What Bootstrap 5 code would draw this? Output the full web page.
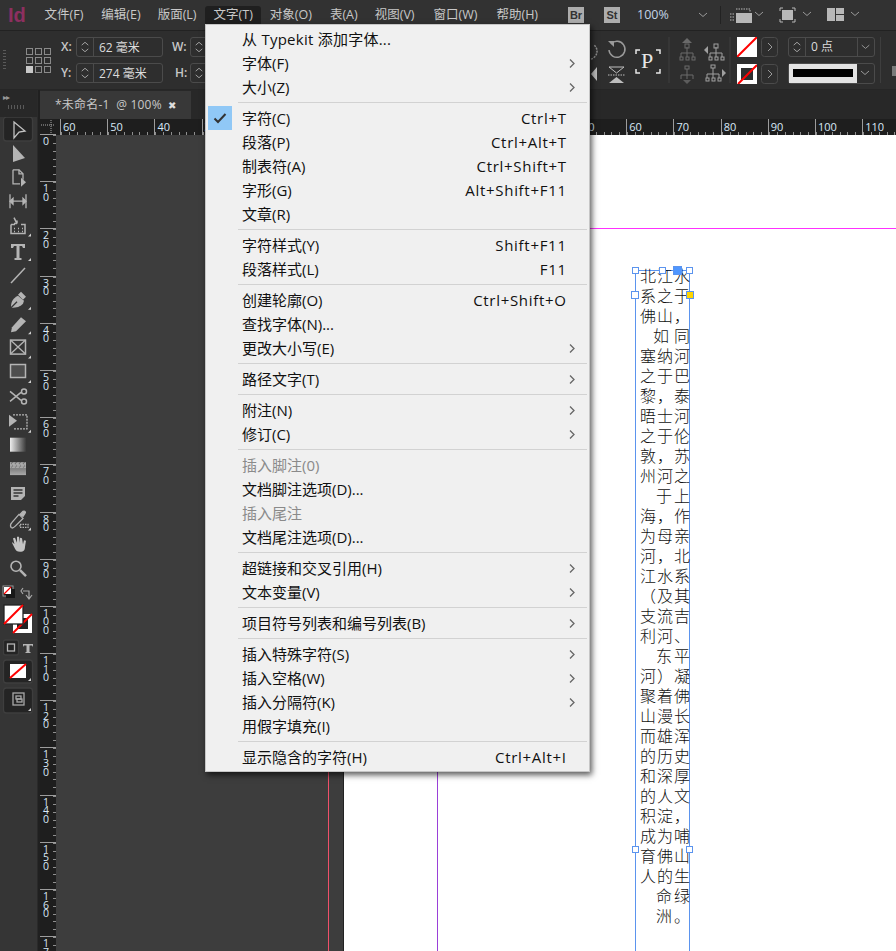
<!DOCTYPE html>
<html lang="zh">
<head>
<meta charset="utf-8">
<title>InDesign</title>
<link href="https://cdn.jsdelivr.net/npm/bootstrap@5.3.0/dist/css/bootstrap.min.css" rel="stylesheet">
<style>
html,body{margin:0;height:951px;overflow:hidden;background:#3d3d3d}
body{font-family:"Open Sans","Noto Sans CJK SC",sans-serif;font-size:12px;color:#ccc}
.app-shell{width:896px;height:951px;position:relative;overflow:hidden}
.menu-strip{height:31px;flex:none;background:#323232;border-bottom:1px solid #222;padding:6px 0 0 0}
.logo-id{width:36px;padding-left:8px;font:700 20px/18px "Liberation Sans",sans-serif;color:#8d2f60}
.menu-word{padding:0 8.5px;height:18px;line-height:18px;white-space:nowrap;color:#c8c8c8;font-size:12.5px}
.menu-word.on{background:#1f1f1f;border-radius:3px 3px 0 0}
.nudge1{margin-left:1px}.nudge2{margin-left:2px}
.bridge{width:16px;height:16px;background:#adadad;color:#333;font:700 11px/16px "Liberation Sans",sans-serif;text-align:center;flex:none}
.zoom-val{color:#c2d4e6;font-size:12.5px;line-height:18px;flex:none}
.ctrl-strip{height:59px;flex:none;background:#2e2e2e;border-bottom:1px solid #262626}
.grip-v{width:3px;height:21px;background:repeating-linear-gradient(180deg,#5a5a5a 0 1px,transparent 1px 3px);margin-left:3px}
.ref-grid{display:grid;grid-template-columns:repeat(3,7px);gap:2px;margin-left:20px}
.ref-grid i{width:7px;height:7px;border:1px solid #8a8a8a;display:block}
.ref-grid i.sel{background:#c8c8c8;border-color:#c8c8c8}
.xy-col{gap:6px}
.xy-row{height:20px;display:flex;align-items:center}
.xy-lab{width:15px;font-weight:600;color:#c8c8c8;font-size:12px;line-height:20px}
.num-box{height:20px;border:1px solid #4b4b4b;border-radius:3px;display:flex;align-items:center;color:#dcdcdc}
.num-text{padding:1px 0 0 5px}
.step-c{width:17px;height:18px;border-right:1px solid #4b4b4b;flex:none;display:block}
.sep-v{width:1px;height:46px;background:#3e3e3e;flex:none}
.tab-strip{height:29px;flex:none;background:#282828;padding-top:1px}
.doc-tab{width:151px;height:28px;background:#383838;padding-left:15px;line-height:28px;color:#c8c8c8;letter-spacing:.2px;font-size:12px}
.doc-x{margin-left:3px;font-size:10px;color:#ddd}
.tool-col{width:38px;background:#353535;border-right:1px solid #2a2a2a;flex:none}
.col-gap{width:2px;background:#202020;flex:none}
.tool-head{height:27px;background:#282828;position:relative}
.tool-head span{position:absolute;left:3px;top:0;font-size:8px;color:#9a9a9a;letter-spacing:-1px;line-height:13px}
.tool-head i{position:absolute;left:8px;top:15px;width:18px;height:4px;background:repeating-linear-gradient(90deg,#5a5a5a 0 1px,transparent 1px 3px)}
.ruler-top{height:16px;flex:none;background:#1e1e1e;display:flex;overflow:hidden}
.ruler-corner{width:20px;flex:none;background:#1e1e1e}
.ruler-corner svg{display:block}
.tick-h{flex:none;width:47.2px;height:16px;border-left:1px solid #9c9c9c;padding-left:2px;font:11px/15px "Open Sans",sans-serif;color:#d8e8f6;
 background:repeating-linear-gradient(90deg,#8f8f8f 0 1px,transparent 1px 7.87px) 0 100%/100% 3px no-repeat}
.ruler-left{width:16px;flex:none;background:#1e1e1e;overflow:hidden;margin-top:-1px}
.tick-v{height:47.2px;border-top:1px solid #9c9c9c;padding:2px 0 0 3px;font:10.5px/8.6px "Open Sans",sans-serif;color:#d8e8f6;overflow:hidden;
 background:repeating-linear-gradient(180deg,#8f8f8f 0 1px,transparent 1px 7.87px) 100% 0/3px 100% no-repeat}
.tick-v span{display:block;height:8.6px}
.paste-area{background:#3d3d3d;padding-left:288px;position:relative;min-height:0}
.sheet{background:#fff;position:relative;box-shadow:-1px 0 0 #222}
.bleed-line{position:absolute;left:272px;top:0;bottom:0;width:1px;background:#f0506a}
.margin-v{position:absolute;left:93px;top:0;bottom:0;width:1px;background:#9a40d8}
.guide-h{position:absolute;left:0;right:0;top:93px;height:1px;background:#ff30ff}
.text-frame{position:absolute;left:291px;top:135px;width:55px;height:700px;border:1px solid #5b94ee;border-bottom:0;padding:0 0 0 4px;
 font-family:"Noto Sans CJK SC",sans-serif;font-weight:300;font-size:16px;line-height:20px;color:#111}
.text-frame div.ln{text-align:justify;text-align-last:justify;width:50px;height:20px;white-space:nowrap;overflow:visible}
.text-frame div.ln:first-child{margin-top:-6px}
.text-frame div.ln.ind13{padding-left:13px}
.text-frame div.ln.ind16{padding-left:16px}
.handle{position:absolute;width:7px;height:7px;background:#fff;border:1px solid #5b94ee}
.handle.big{width:8px;height:8px}
.handle.solid{background:#4f96ff;width:9px;height:9px}
.handle.port{background:#ffd500;width:8px;height:8px}
.type-menu.dropdown-menu{display:block;position:absolute;left:205px;top:24px;width:385px;height:748px;margin:0;padding:2px 0 0;background:#f0f0f0;border:1px solid #c6c6c6;border-radius:0;box-shadow:2px 3px 6px rgba(0,0,0,.65);font-size:15px;font-family:"Open Sans","Noto Sans CJK SC",sans-serif}
.type-menu .dropdown-item{height:24px;line-height:24px;padding:0 23px 0 36px;color:#111;display:flex;justify-content:space-between;position:relative;background:transparent;white-space:nowrap}
.type-menu .dropdown-item.disabled{color:#8a8a8a}
.type-menu .dropdown-divider{margin:3px 2px 3px 32px;border-top:1px solid #d2d2d2;opacity:1;height:1px}
.key-hint{letter-spacing:.7px;margin-right:-.7px}
.wide-latin{letter-spacing:.25px}
.sub-mark{position:absolute;right:14px;top:8px;display:block}
.check-box{position:absolute;left:2px;top:0;width:24px;height:24px;background:#90c8f6;display:flex;align-items:center;justify-content:center}
</style>
</head>
<body>
<div class="app-shell d-flex flex-column">

  <!-- application menu bar -->
  <div class="menu-strip d-flex align-items-start">
    <div class="logo-id">Id</div>
    <div class="menu-word">文件(F)</div>
    <div class="menu-word nudge1">编辑(E)</div>
    <div class="menu-word">版面(L)</div>
    <div class="menu-word on">文字(T)</div>
    <div class="menu-word">对象(O)</div>
    <div class="menu-word nudge1">表(A)</div>
    <div class="menu-word">视图(V)</div>
    <div class="menu-word nudge2">窗口(W)</div>
    <div class="menu-word nudge2">帮助(H)</div>
    <div class="ms-auto d-flex align-items-center flex-shrink-0" style="width:328px;height:18px">
      <div class="bridge">Br</div>
      <div class="bridge" style="margin-left:20px;margin-right:17px">St</div>
      <div class="zoom-val" style="width:62px">100%</div>
      <svg width="197" height="18" viewBox="0 0 197 18" style="flex:none">
        <path d="M0 7l4 3.500 4-3.500" fill="none" stroke="#9a9a9a"/>
        <g transform="translate(4 0)">
        <rect x="17" y="-1" width="1" height="20" fill="#222"/>
        <path d="M27 8h5M27 11h4M27 14h5" stroke="#b8b8b8" stroke-dasharray="1.500 1"/><rect x="33" y="7" width="16" height="10" fill="#b8b8b8"/><path d="M33 3h14v3" fill="none" stroke="#b8b8b8" stroke-dasharray="1.500 1"/>
        <path d="M52 6l4 3.500 4-3.500" fill="none" stroke="#9a9a9a"/>
        <path d="M77 5V2h3M89 2h3v3M92 13v3h-3M80 16h-3v-3" fill="none" stroke="#b8b8b8"/><rect x="79" y="4" width="11" height="10" fill="#b8b8b8"/>
        <path d="M100 6l4 3.500 4-3.500" fill="none" stroke="#9a9a9a"/>
        <rect x="124" y="2" width="8" height="13" fill="#b8b8b8"/><rect x="133" y="2" width="8" height="6" fill="#b8b8b8"/><rect x="133" y="9" width="8" height="6" fill="#b8b8b8"/>
        <path d="M148 6l4 3.500 4-3.500" fill="none" stroke="#9a9a9a"/>
        </g>
      </svg>
    </div>
  </div>

  <!-- control panel -->
  <div class="ctrl-strip d-flex align-items-center">
    <div class="grip-v"></div>
    <div class="ref-grid">
      <i></i><i></i><i></i><i></i><i></i><i></i><i class="sel"></i><i></i><i></i>
    </div>
    <div class="d-flex flex-column xy-col" style="margin-left:10px">
      <div class="xy-row"><span class="xy-lab">X:</span>
        <div class="num-box" style="width:87px"><svg class="step-c" viewBox="0 0 17 18"><path d="M5 7l3.500-3 3.500 3M5 11l3.500 3 3.500-3" fill="none" stroke="#a8a8a8"/></svg><span class="num-text">62 毫米</span></div>
        <span class="xy-lab" style="margin-left:9px;width:18px">W:</span>
        <div class="num-box" style="width:40px"><svg class="step-c" viewBox="0 0 17 18"><path d="M5 7l3.500-3 3.500 3M5 11l3.500 3 3.500-3" fill="none" stroke="#a8a8a8"/></svg></div>
      </div>
      <div class="xy-row"><span class="xy-lab">Y:</span>
        <div class="num-box" style="width:87px"><svg class="step-c" viewBox="0 0 17 18"><path d="M5 7l3.500-3 3.500 3M5 11l3.500 3 3.500-3" fill="none" stroke="#a8a8a8"/></svg><span class="num-text">274 毫米</span></div>
        <span class="xy-lab" style="margin-left:12px;width:15px">H:</span>
        <div class="num-box" style="width:40px"><svg class="step-c" viewBox="0 0 17 18"><path d="M5 7l3.500-3 3.500 3M5 11l3.500 3 3.500-3" fill="none" stroke="#a8a8a8"/></svg></div>
      </div>
    </div>
    <div class="ms-auto d-flex align-items-center" style="width:306px;overflow:hidden">
      <svg width="141" height="50" viewBox="0 0 141 50" style="flex:none">
        <path d="M1 24a8 8 0 0 0 6-8 8 8 0 0 0-3-6" fill="none" stroke="#8e8e8e" stroke-width="1.500" stroke-dasharray="2 1"/>
        <path d="M21 9a8 8 0 1 1-2 6" fill="none" stroke="#9a9a9a" stroke-width="1.500"/><path d="M18 6h6v6z" fill="#9a9a9a"/>
        <path d="M7 32v14l-6-7z" fill="#bdbdbd"/>
        <path d="M19 32h15l-7.500 6z" fill="none" stroke="#bdbdbd"/><path d="M18 40h17" stroke="#bdbdbd" stroke-dasharray="1.500 1"/><path d="M19 48h15l-7.500-6z" fill="#bdbdbd"/>
        <path d="M46 19v-4h4M66 15h4v4M70 34v4h-4M50 38h-4v-4" fill="none" stroke="#e6e6e6" stroke-width="1.500"/>
        <path d="M79 2v46" stroke="#3e3e3e"/>
        <g fill="none" stroke="#6a6a6a"><path d="M91 18h12M97 12v6M91 18v4M97 18v4M103 18v4"/><rect x="95" y="9" width="4" height="4"/><rect x="90" y="22" width="3" height="3"/><rect x="96" y="22" width="3" height="3"/><rect x="102" y="22" width="3" height="3"/></g><path d="M92 8l5-5 5 5z" fill="#6a6a6a"/>
        <g fill="none" stroke="#6a6a6a"><path d="M91 40h12M97 34v6M91 40v4M97 40v4M103 40v4"/><rect x="95" y="31" width="4" height="3"/></g><path d="M93 45l4 4 4-4z" fill="#5c5c5c"/>
        <g fill="none" stroke="#a0a0a0"><path d="M120 18h12M126 12v6M120 18v4M126 18v4M132 18v4"/><rect x="124" y="9" width="4" height="4"/><rect x="119" y="22" width="3" height="3"/><rect x="125" y="22" width="3" height="3"/><rect x="131" y="22" width="3" height="3"/></g><path d="M118 11v8l-4-4z" fill="#a0a0a0"/>
        <g fill="none" stroke="#a0a0a0"><path d="M117 39h12M123 33v6M117 39v4M123 39v4M129 39v4"/><rect x="121" y="30" width="4" height="3"/><rect x="116" y="43" width="3" height="3"/><rect x="122" y="43" width="3" height="3"/><rect x="128" y="43" width="3" height="3"/></g><path d="M132 34v8l4-4z" fill="#a0a0a0"/>
        <path d="M140 2v46" stroke="#3e3e3e"/>
        <text x="51" y="33" font-family="Liberation Serif,serif" font-size="22" fill="#e6e6e6">P</text>
      </svg>
      <div class="d-flex flex-column" style="gap:7px;margin-left:6px;flex:none">
        <div class="d-flex align-items-center" style="gap:4px">
          <svg width="20" height="20" viewBox="0 0 20 20" style="display:block"><rect width="20" height="20" fill="#fff"/><path d="M0 20L20 0" stroke="#f00" stroke-width="2"/></svg>
          <svg width="17" height="20" viewBox="0 0 17 20" style="display:block"><rect x=".5" y=".5" width="16" height="19" rx="3" fill="none" stroke="#4b4b4b"/><path d="M7 6l4 4-4 4" fill="none" stroke="#9a9a9a"/></svg>
        </div>
        <div class="d-flex align-items-center" style="gap:4px">
          <svg width="20" height="20" viewBox="0 0 20 20" style="display:block"><rect width="20" height="20" fill="#fff"/><rect x="4" y="4" width="12" height="12" fill="#2e2e2e"/><path d="M1 20L20 1" stroke="#f00" stroke-width="2"/></svg>
          <svg width="17" height="20" viewBox="0 0 17 20" style="display:block"><rect x=".5" y=".5" width="16" height="19" rx="3" fill="none" stroke="#4b4b4b"/><path d="M7 6l4 4-4 4" fill="none" stroke="#9a9a9a"/></svg>
        </div>
      </div>
      <div class="d-flex flex-column" style="gap:6px;margin-left:10px;flex:none">
        <div class="num-box" style="width:87px"><svg class="step-c" viewBox="0 0 17 18"><path d="M5 7l3.500-3 3.500 3M5 11l3.500 3 3.500-3" fill="none" stroke="#a8a8a8"/></svg><span style="padding-left:5px;width:51px;height:18px;line-height:18px">0 点</span><svg width="17" height="18" viewBox="0 0 17 18" style="border-left:1px solid #4b4b4b"><path d="M4 7l4 3.500 4-3.500" fill="none" stroke="#9a9a9a"/></svg></div>
        <div class="num-box" style="width:87px;height:21px">
          <svg width="68" height="19" viewBox="0 0 68 19" style="display:block;flex:none"><rect width="68" height="19" fill="#e3e3e3"/><rect x="4" y="5" width="60" height="8" fill="#000"/></svg>
          <svg width="17" height="18" viewBox="0 0 17 18"><path d="M4 7l4 3.500 4-3.500" fill="none" stroke="#9a9a9a"/></svg>
        </div>
      </div>
      <div class="sep-v" style="margin-left:5px"></div>
      <svg width="10" height="46" viewBox="0 0 10 46" style="flex:none;margin-left:10px"><path d="M6 8V4h4M6 18v4h4" fill="none" stroke="#aaa"/><rect x="1" y="29" width="9" height="10" fill="#7a7a7a"/></svg>
    </div>
  </div>

  <!-- workspace -->
  <div class="d-flex flex-grow-1" style="min-height:0">
    <div class="tool-col">
      <div class="tool-head"><span>▸▸</span><i></i></div>
      <svg width="38" height="634" viewBox="0 0 38 634" style="display:block" fill="none" stroke="#b4b4b4" stroke-width="1.300">
        <rect x="3.500" y="0" width="29" height="24" rx="3" fill="#242424" stroke="#3e3e3e"/>
        <path d="M14 5l11 9-6 1-5 6z" stroke="#c2c2c2"/>
        <path d="M13 28l12 13-12 4z" fill="#b4b4b4" stroke="none"/>
        <g transform="translate(0,48.800)"><path d="M13 4h6l4 4v6M13 4v14h7"/><path d="M19 4v4h4"/><path d="M21 12v9l5-4.500z" fill="#b4b4b4" stroke="none"/></g>
        <g transform="translate(0,73.200)"><path d="M10 4v14M26 4v14M13 11h10"/><path d="M13 8v6l-3-3zM23 8v6l3-3z" fill="#b4b4b4"/></g>
        <g transform="translate(0,97.600)" stroke-width="1.500"><path d="M11 10v9h14v-9h-4M15 10h-4"/><path d="M14 3l3 6M17 9h-3M17 9V6" /><path d="M14 14h1M18 14h1M22 14h1M14 17h1M18 17h1M22 17h1"/><path d="M31 22h-3l3-3z" fill="#cfcfcf" stroke="none"/></g>
        <g transform="translate(0,122)"><path d="M11 5h14v4h-2l-1-2h-2.500v12h2v2h-7v-2h2V7H14l-1 2h-2z" fill="#b4b4b4" stroke="none"/><path d="M31 22h-3l3-3z" fill="#cfcfcf" stroke="none"/></g>
        <path d="M11 166l14-15" stroke-width="1.500" />
        <g transform="translate(0,170.800)"><path d="M11 20c0-5 1-8 5-11l2-1 6 5-1 3c-3 3-6 4-12 4z" fill="#b4b4b4" stroke="none"/><path d="M18 7l3-3 5 5-3 3z" fill="#b4b4b4" stroke="none"/><path d="M11 20l6-6" stroke="#353535"/><path d="M31 22h-3l3-3z" fill="#cfcfcf" stroke="none"/></g>
        <g transform="translate(0,195.200)"><path d="M11 20l1-5 9-10 5 4-10 10z" fill="#b4b4b4" stroke="none"/><path d="M31 22h-3l3-3z" fill="#cfcfcf" stroke="none"/></g>
        <g transform="translate(0,219.600)"><rect x="10.500" y="3.500" width="15" height="14" stroke-width="1.500"/><path d="M10.500 3.500l15 14M25.500 3.500l-15 14"/><path d="M31 22h-3l3-3z" fill="#cfcfcf" stroke="none"/></g>
        <g transform="translate(0,244)"><rect x="10.500" y="3.500" width="15" height="13" fill="#4e4e4e" stroke-width="1.500"/><path d="M31 22h-3l3-3z" fill="#cfcfcf" stroke="none"/></g>
        <g transform="translate(0,268.400)" stroke-width="1.500"><path d="M10 6l11 9M10 16l11-9"/><circle cx="24" cy="6" r="2.500"/><circle cx="24" cy="16" r="2.500"/></g>
        <g transform="translate(0,292.800)"><path d="M9 5l8 6-8 6z" fill="#b4b4b4" stroke="none"/><path d="M13 5h14v14H14" stroke-dasharray="2 1"/><path d="M31 23h-3l3-3z" fill="#cfcfcf" stroke="none"/></g>
        <defs><linearGradient id="gr1"><stop offset="0" stop-color="#eee"/><stop offset="1" stop-color="#3a3a3a"/></linearGradient><linearGradient id="gr2" x2="0" y2="1"><stop offset="0" stop-color="#555"/><stop offset="1" stop-color="#aaa"/></linearGradient><pattern id="chk" width="4" height="4" patternUnits="userSpaceOnUse"><rect width="2" height="2" fill="#444"/><rect x="2" y="2" width="2" height="2" fill="#444"/></pattern></defs>
        <g transform="translate(0,317.200)"><rect x="10" y="3.500" width="16" height="14" fill="url(#gr1)" stroke="none"/></g>
        <g transform="translate(0,341.600)"><rect x="10" y="3.500" width="16" height="13" fill="url(#gr2)" stroke="none"/><rect x="10" y="3.500" width="16" height="6" fill="url(#chk)" stroke="none"/></g>
        <g transform="translate(0,366)"><path d="M11 4h14v9l-4 4H11z" fill="#b4b4b4" stroke="none"/><path d="M13.500 7h9M13.500 10h9M13.500 13h5" stroke="#353535"/></g>
        <g transform="translate(0,390.400)"><path d="M11 20c-1-2 0-4 1-5l7-8 4 4-8 8c-1 1-3 2-4 1z"/><path d="M20 7l3-3c2-1 3 1 2 2l-2 3z" fill="#b4b4b4"/><path d="M20 17h8v3h-8z" stroke-dasharray="1.500 1"/><path d="M31 23h-3l3-3z" fill="#cfcfcf" stroke="none"/></g>
        <g transform="translate(0,414.800)"><path d="M12 11l3 6c1 2 2 3 5 3 4 0 5-2 5-5l1-6-2-.500-1 4-1-6-2-.500v5l-1-6h-2v6l-2-5-2 .500 1.500 6-2-2z" fill="#c4c4c4" stroke="none"/></g>
        <g transform="translate(0,439.200)" stroke-width="1.600"><circle cx="16" cy="10" r="5"/><path d="M20 14l6 6" stroke-width="2.500"/></g>
        <g stroke="none">
          <rect x="3" y="469" width="10" height="10" fill="#181818" stroke="#999" stroke-width="1"/><rect x="6" y="472" width="9" height="9" fill="#181818"/><rect x="4" y="470" width="7" height="7" fill="#fff"/><path d="M4 477l7-7" stroke="#f00"/>
          <path d="M23 474h6v7M26 478l3 4 3-4M23 471l-2 3 2 3" fill="none" stroke="#a8a8a8" stroke-width="1.200"/>
          <rect x="13" y="497" width="19" height="19" fill="#fff"/><rect x="17" y="501" width="11" height="11" fill="#222"/><path d="M13 516l19-19" stroke="#f00" stroke-width="2"/>
          <rect x="4" y="488" width="19" height="19" fill="#fff" stroke="#222"/><path d="M4 507l19-19" stroke="#f00" stroke-width="2"/>
          <rect x="3.500" y="523" width="15" height="15" rx="2" fill="#242424" stroke="#3e3e3e"/><rect x="7.500" y="527" width="7" height="7" fill="none" stroke="#b4b4b4"/>
          <path d="M23 527h10v3l-1-1.500h-2.500v6.500h1v1h-5v-1h1v-6.500H24L23 530z" fill="#b4b4b4"/>
          <rect x="3.500" y="543" width="29" height="23" rx="3" fill="#242424" stroke="#3e3e3e"/><rect x="10" y="547" width="16" height="14" fill="#fff"/><path d="M10 561l16-14" stroke="#f00" stroke-width="2"/><path d="M31 564h-3l3-3z" fill="#cfcfcf"/>
          <rect x="3.500" y="571" width="29" height="25" rx="3" fill="#242424" stroke="#3e3e3e"/><rect x="13" y="576" width="11" height="12" fill="none" stroke="#a8a8a8"/><rect x="16" y="579" width="5" height="3" fill="none" stroke="#a8a8a8"/><rect x="17" y="582" width="5" height="3" fill="none" stroke="#a8a8a8"/><path d="M31 594h-3l3-3z" fill="#cfcfcf"/>
        </g>
      </svg>
    </div>
    <div class="col-gap"></div>
    <div class="d-flex flex-column flex-grow-1" style="min-width:0">
      <div class="tab-strip"><div class="doc-tab">*未命名-1&nbsp; @ 100% <span class="doc-x">✖</span></div></div>
      <div class="ruler-top">
        <div class="ruler-corner"><svg width="20" height="16" viewBox="0 0 20 16"><path d="M1 6h13M11 1v14" stroke="#aaa" stroke-dasharray="1 1" fill="none"/></svg></div>
        <div class="tick-h">60</div><div class="tick-h">50</div><div class="tick-h">40</div><div class="tick-h">30</div><div class="tick-h">20</div><div class="tick-h">10</div><div class="tick-h">0</div><div class="tick-h">10</div><div class="tick-h">20</div><div class="tick-h">30</div><div class="tick-h">40</div><div class="tick-h">50</div><div class="tick-h">60</div><div class="tick-h">70</div><div class="tick-h">80</div><div class="tick-h">90</div><div class="tick-h">100</div><div class="tick-h">110</div>
      </div>
      <div class="d-flex flex-grow-1" style="min-height:0">
        <div class="ruler-left">
          <div class="tick-v"><span>0</span></div>
          <div class="tick-v"><span>1</span><span>0</span></div>
          <div class="tick-v"><span>2</span><span>0</span></div>
          <div class="tick-v"><span>3</span><span>0</span></div>
          <div class="tick-v"><span>4</span><span>0</span></div>
          <div class="tick-v"><span>5</span><span>0</span></div>
          <div class="tick-v"><span>6</span><span>0</span></div>
          <div class="tick-v"><span>7</span><span>0</span></div>
          <div class="tick-v"><span>8</span><span>0</span></div>
          <div class="tick-v"><span>9</span><span>0</span></div>
          <div class="tick-v"><span>1</span><span>0</span><span>0</span></div>
          <div class="tick-v"><span>1</span><span>1</span><span>0</span></div>
          <div class="tick-v"><span>1</span><span>2</span><span>0</span></div>
          <div class="tick-v"><span>1</span><span>3</span><span>0</span></div>
          <div class="tick-v"><span>1</span><span>4</span><span>0</span></div>
          <div class="tick-v"><span>1</span><span>5</span><span>0</span></div>
          <div class="tick-v"><span>1</span><span>6</span><span>0</span></div>
          <div class="tick-v"><span>1</span><span>7</span></div>
        </div>
        <div class="paste-area flex-grow-1 d-flex">
          <div class="bleed-line"></div>
          <div class="sheet flex-grow-1">
            <div class="margin-v"></div>
            <div class="guide-h"></div>
            <div class="text-frame">
              <div class="ln">北江水</div><div class="ln">系之于</div><div class="ln">佛山，</div><div class="ln ind13">如同</div><div class="ln">塞纳河</div><div class="ln">之于巴</div><div class="ln">黎，泰</div><div class="ln">晤士河</div><div class="ln">之于伦</div><div class="ln">敦，苏</div><div class="ln">州河之</div><div class="ln ind16">于上</div><div class="ln">海，作</div><div class="ln">为母亲</div><div class="ln">河，北</div><div class="ln">江水系</div><div class="ln">（及其</div><div class="ln">支流吉</div><div class="ln">利河、</div><div class="ln ind16">东平</div><div class="ln">河）凝</div><div class="ln">聚着佛</div><div class="ln">山漫长</div><div class="ln">而雄浑</div><div class="ln">的历史</div><div class="ln">和深厚</div><div class="ln">的人文</div><div class="ln">积淀，</div><div class="ln">成为哺</div><div class="ln">育佛山</div><div class="ln">人的生</div><div class="ln ind16">命绿</div><div class="ln ind16">洲。</div>
              <span class="handle" style="left:-4px;top:-4px"></span>
              <span class="handle" style="left:23px;top:-4px"></span>
              <span class="handle solid" style="left:37px;top:-5px"></span>
              <span class="handle" style="left:50px;top:-4px"></span>
              <span class="handle big" style="left:-5px;top:20px"></span>
              <span class="handle port" style="left:50px;top:20px"></span>
              <span class="handle" style="left:-4px;top:575px"></span>
              <span class="handle" style="left:50px;top:575px"></span>
            </div>
          </div>
        </div>
      </div>
    </div>
  </div>

  <!-- 文字 menu -->
  <div class="dropdown-menu type-menu">
    <a class="dropdown-item"><span class="wide-latin">从 Typekit 添加字体...</span></a>
    <a class="dropdown-item"><span>字体(F)</span><svg class="sub-mark" width="6" height="9" viewBox="0 0 6 9"><path d="M1 .5l4 4-4 4" fill="none" stroke="#666" stroke-width="1.300"/></svg></a>
    <a class="dropdown-item"><span>大小(Z)</span><svg class="sub-mark" width="6" height="9" viewBox="0 0 6 9"><path d="M1 .5l4 4-4 4" fill="none" stroke="#666" stroke-width="1.300"/></svg></a>
    <div class="dropdown-divider"></div>
    <a class="dropdown-item"><span class="check-box"><svg width="14" height="12" viewBox="0 0 14 12"><path d="M1.500 6.500l3.500 3.500 7.500-8" fill="none" stroke="#333" stroke-width="2"/></svg></span><span>字符(C)</span><span class="key-hint">Ctrl+T</span></a>
    <a class="dropdown-item"><span>段落(P)</span><span class="key-hint">Ctrl+Alt+T</span></a>
    <a class="dropdown-item"><span>制表符(A)</span><span class="key-hint">Ctrl+Shift+T</span></a>
    <a class="dropdown-item"><span>字形(G)</span><span class="key-hint">Alt+Shift+F11</span></a>
    <a class="dropdown-item"><span>文章(R)</span></a>
    <div class="dropdown-divider"></div>
    <a class="dropdown-item"><span>字符样式(Y)</span><span class="key-hint">Shift+F11</span></a>
    <a class="dropdown-item"><span>段落样式(L)</span><span class="key-hint">F11</span></a>
    <div class="dropdown-divider"></div>
    <a class="dropdown-item"><span>创建轮廓(O)</span><span class="key-hint">Ctrl+Shift+O</span></a>
    <a class="dropdown-item"><span>查找字体(N)...</span></a>
    <a class="dropdown-item"><span>更改大小写(E)</span><svg class="sub-mark" width="6" height="9" viewBox="0 0 6 9"><path d="M1 .5l4 4-4 4" fill="none" stroke="#666" stroke-width="1.300"/></svg></a>
    <div class="dropdown-divider"></div>
    <a class="dropdown-item"><span>路径文字(T)</span><svg class="sub-mark" width="6" height="9" viewBox="0 0 6 9"><path d="M1 .5l4 4-4 4" fill="none" stroke="#666" stroke-width="1.300"/></svg></a>
    <div class="dropdown-divider"></div>
    <a class="dropdown-item"><span>附注(N)</span><svg class="sub-mark" width="6" height="9" viewBox="0 0 6 9"><path d="M1 .5l4 4-4 4" fill="none" stroke="#666" stroke-width="1.300"/></svg></a>
    <a class="dropdown-item"><span>修订(C)</span><svg class="sub-mark" width="6" height="9" viewBox="0 0 6 9"><path d="M1 .5l4 4-4 4" fill="none" stroke="#666" stroke-width="1.300"/></svg></a>
    <div class="dropdown-divider"></div>
    <a class="dropdown-item disabled"><span>插入脚注(0)</span></a>
    <a class="dropdown-item"><span>文档脚注选项(D)...</span></a>
    <a class="dropdown-item disabled"><span>插入尾注</span></a>
    <a class="dropdown-item"><span>文档尾注选项(D)...</span></a>
    <div class="dropdown-divider"></div>
    <a class="dropdown-item"><span>超链接和交叉引用(H)</span><svg class="sub-mark" width="6" height="9" viewBox="0 0 6 9"><path d="M1 .5l4 4-4 4" fill="none" stroke="#666" stroke-width="1.300"/></svg></a>
    <a class="dropdown-item"><span>文本变量(V)</span><svg class="sub-mark" width="6" height="9" viewBox="0 0 6 9"><path d="M1 .5l4 4-4 4" fill="none" stroke="#666" stroke-width="1.300"/></svg></a>
    <div class="dropdown-divider"></div>
    <a class="dropdown-item"><span>项目符号列表和编号列表(B)</span><svg class="sub-mark" width="6" height="9" viewBox="0 0 6 9"><path d="M1 .5l4 4-4 4" fill="none" stroke="#666" stroke-width="1.300"/></svg></a>
    <div class="dropdown-divider"></div>
    <a class="dropdown-item"><span>插入特殊字符(S)</span><svg class="sub-mark" width="6" height="9" viewBox="0 0 6 9"><path d="M1 .5l4 4-4 4" fill="none" stroke="#666" stroke-width="1.300"/></svg></a>
    <a class="dropdown-item"><span>插入空格(W)</span><svg class="sub-mark" width="6" height="9" viewBox="0 0 6 9"><path d="M1 .5l4 4-4 4" fill="none" stroke="#666" stroke-width="1.300"/></svg></a>
    <a class="dropdown-item"><span>插入分隔符(K)</span><svg class="sub-mark" width="6" height="9" viewBox="0 0 6 9"><path d="M1 .5l4 4-4 4" fill="none" stroke="#666" stroke-width="1.300"/></svg></a>
    <a class="dropdown-item"><span>用假字填充(I)</span></a>
    <div class="dropdown-divider"></div>
    <a class="dropdown-item"><span>显示隐含的字符(H)</span><span class="key-hint">Ctrl+Alt+I</span></a>
  </div>
</div>
<script src="https://cdn.jsdelivr.net/npm/bootstrap@5.3.0/dist/js/bootstrap.bundle.min.js"></script>
</body>
</html>
